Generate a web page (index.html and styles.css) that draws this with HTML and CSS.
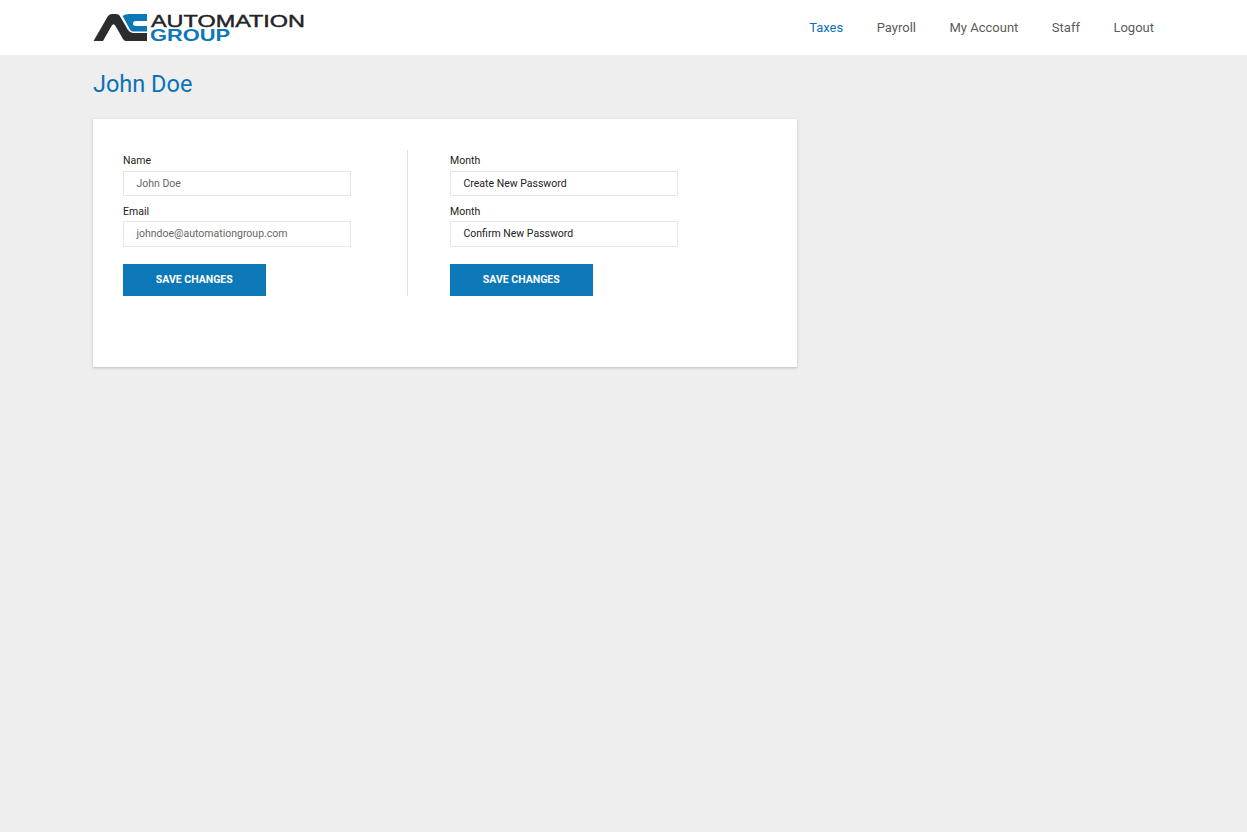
FILE: index.html
```html
<!DOCTYPE html>
<html lang="en">
<head>
<meta charset="utf-8">
<title>John Doe</title>
<link rel="stylesheet" href="styles.css">
</head>
<body>
<header class="topbar">
  <svg class="logo" width="214" height="30" viewBox="0 0 214 30" aria-label="Automation Group">
    <path class="logo-dark" d="M0.500 28 L15 3 Q16.500 1 19 1 L23 1 Q25.500 1 26.500 2.500 L35 17 Q37 20 40 20 L54 20 L54 28 L33 28 Q31 28 30 26 L22.500 13 Q20.500 9.500 18.500 13 L10 28 Z"/>
    <path class="logo-blue" d="M29.500 3 Q32 1 36 1 L54 1 L54 8 L42.500 8 Q40 8 40 10.500 Q40 13 42.500 13 L54 13 L54 18.500 L40 18.500 Q38 18.500 37 16.500 Z"/>
    <text class="logo-top" x="58" y="13.700" textLength="154" lengthAdjust="spacingAndGlyphs">AUTOMATION</text>
    <text class="logo-bottom" x="57" y="27.800" textLength="80" lengthAdjust="spacingAndGlyphs">GROUP</text>
  </svg>
  <nav class="nav">
    <a class="nav-link active">Taxes</a>
    <a class="nav-link">Payroll</a>
    <a class="nav-link">My Account</a>
    <a class="nav-link">Staff</a>
    <a class="nav-link">Logout</a>
  </nav>
</header>
<main class="content">
  <h1 class="title">John Doe</h1>
  <section class="card">
    <form class="col col-left">
      <label class="label">Name</label>
      <div class="input muted">John Doe</div>
      <label class="label">Email</label>
      <div class="input muted">johndoe@automationgroup.com</div>
      <div class="btn">SAVE CHANGES</div>
    </form>
    <form class="col col-right">
      <label class="label">Month</label>
      <div class="input">Create New Password</div>
      <label class="label">Month</label>
      <div class="input">Confirm New Password</div>
      <div class="btn">SAVE CHANGES</div>
    </form>
  </section>
</main>
</body>
</html>
```
FILE: styles.css
```css
* { box-sizing: border-box; }
html, body { margin: 0; height: 100%; }
body {
  background: #eeeeee;
  font-family: Roboto, "Liberation Sans", sans-serif;
  overflow: hidden;
}
.topbar {
  height: 55px;
  background: #fff;
  display: flex;
  align-items: flex-start;
  justify-content: space-between;
  padding: 13px 93px 0 93px;
}
.logo { display: block; }
.logo-dark { fill: #2b2c2e; }
.logo-blue { fill: #0c78b8; }
.logo-top { font: 400 16.500px "Liberation Sans", sans-serif; fill: #222325; stroke: #222325; stroke-width: 0.4px; }
.logo-bottom { font: 700 16.500px "Liberation Sans", sans-serif; fill: #0c78b8; }
.nav { display: flex; gap: 33.500px; padding-top: 5.500px; }
.nav-link { font-size: 13px; line-height: 17px; color: #5b5b5b; }
.nav-link.active { color: #0b72b8; }
.content { padding: 0 93px; }
.title {
  margin: 0;
  padding-top: 15px;
  font-size: 23.500px;
  line-height: 29px;
  font-weight: 400;
  color: #0b72b8;
}
.card {
  margin-top: 20px;
  width: 704px;
  height: 248px;
  background: #fff;
  box-shadow: 0 1px 0 #cfcfcf, 0 1px 3px rgba(0, 0, 0, 0.2);
  padding: 31px 30px;
  display: flex;
  align-items: flex-start;
}
.col { display: flex; flex-direction: column; height: 146px; padding-top: 0.250px; }
.col-left { width: 285px; border-right: 1px solid #e2e2e2; }
.col-right { margin-left: 42px; }
.label { font-size: 10.500px; line-height: 13px; height: 20.500px; padding-top: 4px; color: #222; }
.input {
  width: 227.500px;
  height: 25.500px;
  border: 1px solid #e6e6e6;
  background: #fff;
  padding-left: 12.500px;
  font-size: 10.500px;
  line-height: 23px;
  color: #222;
  margin-bottom: 4.500px;
}
.input.muted { color: #666; }
.btn {
  width: 142.500px;
  height: 32px;
  margin-top: 12.750px;
  background: #0c78b8;
  color: #fff;
  font-size: 10.500px;
  font-weight: 700;
  line-height: 31px;
  text-align: center;
}
```
